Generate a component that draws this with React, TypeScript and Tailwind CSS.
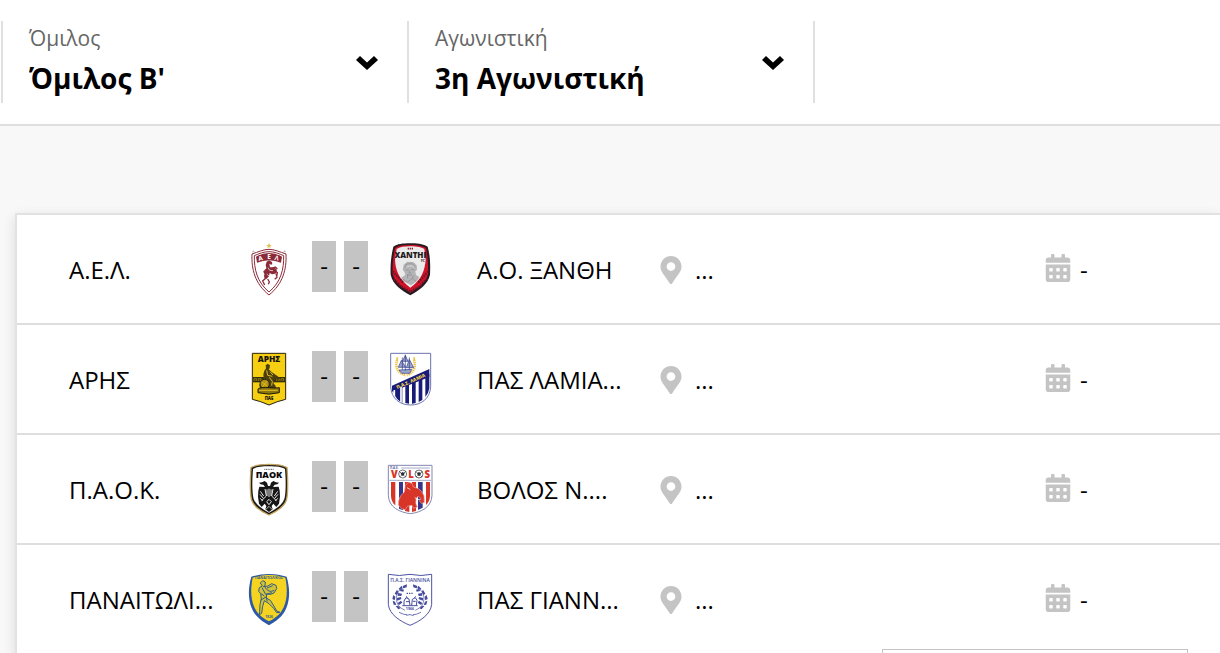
import { ReactNode } from 'react'
import { FaCalendarAlt, FaMapMarkerAlt } from 'react-icons/fa'

interface Match {
  home: string
  away: string
  homeCrest: ReactNode
  awayCrest: ReactNode
}

const crestFont = "'Open Sans', sans-serif"

function HomeCrest({ name, children }: { name: string; children: ReactNode }) {
  return (
    <svg viewBox="12 33 150 165" role="img" aria-label={name} className="mb-1 h-[55px] w-[50px] shrink-0">
      {children}
    </svg>
  )
}

function AwayCrest({ name, children }: { name: string; children: ReactNode }) {
  return (
    <svg viewBox="438 33 150 165" role="img" aria-label={name} className="mb-1 h-[55px] w-[50px] shrink-0">
      {children}
    </svg>
  )
}

const ael = (
  <HomeCrest name="Α.Ε.Λ.">
    <path d="M87 39l2.500 6h6l-5 4 2 6-5.500-4-5.500 4 2-6-5-4h6z" fill="#e3bd4e" />
    <path d="M40 60l1.500 3h3l-2.500 2 1 3-3-2-3 2 1-3-2.500-2h3zM134 60l1.500 3h3l-2.500 2 1 3-3-2-3 2 1-3-2.500-2h3z" fill="#b9b9bd" />
    <path d="M87 58C103 58 120 66 138 72C140 118 129 161 87 195C45 161 34 118 36 72C54 66 71 58 87 58z" fill="#fff" stroke="#8b2b39" strokeWidth="3" />
    <path d="M87 65C103 65 117 71 131 77C132 117 123 156 87 186C51 156 42 117 43 77C57 71 71 65 87 65z" fill="none" stroke="#8b2b39" strokeWidth="3" />
    <path d="M48 80Q87 58 126 80L123 98Q87 83 51 98z" fill="#8b2b39" />
    <g fill="#fff" fontFamily={crestFont} fontWeight="700" fontSize="19">
      <text x="56" y="93" transform="rotate(-12 56 93)">Α</text>
      <text x="82" y="87">Ε</text>
      <text x="103" y="89" transform="rotate(12 103 89)">Λ</text>
    </g>
    <path d="M80 95l7-4 9 5 1 7-4 1-5-3 2 11 11 0 8 5 2 7-5 7-10 2-7-4-2 10-7 7-6 0-2-8 3-13 4-11-2-9z" fill="#8b2b39" />
    <path d="M97 115l9-4 6 6M100 120l12 8-2 12M79 118l-7 7 3 6M78 144l-10 9 6 12M83 147l5 9-3 7M108 131l3 11-7 6" fill="none" stroke="#8b2b39" strokeWidth="4" />
    <path d="M84 113l5 8 10 1M80 132l7 6" fill="none" stroke="#fff" strokeWidth="2" />
  </HomeCrest>
)

const xanthi = (
  <AwayCrest name="Α.Ο. ΞΑΝΘΗ">
    <path d="M513 40C536 39 557 44 566 50C575 83 574 111 573 134C567 164 539 181 514 196C488 181 461 164 455 134C454 111 455 83 463 50C474 42 492 40 513 40z" fill="#251b20" />
    <path d="M513 45C535 44 553 49 561 54C567 82 568 110 567 132C561 158 537 173 514 188C491 173 467 158 461 132C460 110 462 82 468 54C479 47 495 45 513 45z" fill="#cf122a" />
    <path d="M513 49C535 49 550 53 556 57L560 90C557 120 549 149 514 173C479 149 470 120 468 90L473 57C482 51 496 49 513 49z" fill="#ebebeb" />
    <path d="M461 124L492 157M465 148L483 164M568 124L537 158M565 146L545 163M481 166L514 185L548 166" fill="none" stroke="#691526" strokeWidth="6" strokeDasharray="5 3" />
    <path d="M491 119l3-15 11-9 18 1 10 10 1 14-5 4 2 11 10 6-7 12-18 13-23-13-7-10 13-8-3-10z" fill="#b4b4b6" />
    <path d="M497 114l6-12 16-1 11 10M500 120h9m7-1h9m-13 2-2 8h7m-12 6h14M492 147l12 10 17-12 10 9M506 133v12m17-9-3 10" fill="none" stroke="#8a8a8e" strokeWidth="2" />
    <path d="M503 111q15-8 23 2" fill="none" stroke="#dadada" strokeWidth="3" />
    <path d="M506 56h18" stroke="#8e2731" strokeWidth="5" strokeDasharray="4 2" />
    <text x="514" y="84" textAnchor="middle" fontFamily={crestFont} fontWeight="800" fontSize="24" fill="#1e191c">XANTHI</text>
    <text x="546" y="97" fontFamily={crestFont} fontWeight="700" fontSize="10" fill="#2b2327">FC</text>
  </AwayCrest>
)

const aris = (
  <HomeCrest name="ΑΡΗΣ">
    <path d="M37 40H137V178Q111 184 87 195Q63 184 37 178z" fill="#f6ce12" stroke="#26220f" strokeWidth="3" />
    <text x="87" y="66" textAnchor="middle" fontFamily={crestFont} fontWeight="800" fontSize="25" fill="#17150e">ΑΡΗΣ</text>
    <path d="M39 111H135V127H39z" fill="#37300f" />
    <path d="M42 123v-7h8v5h-4m9 2v-7h8v5h-4m51 2v-7h8v5h-4m9 2v-7h8v5h-4" fill="none" stroke="#c4a315" strokeWidth="2" />
    <path d="M77 76l6-5 7 5-1 9-3 3 10 9 15 10 8 6-2 6-13-2-4 12 7 9 2 11H60l-2-14 8-14 5-6-1-12 3-11 5-7z" fill="#4c410e" />
    <circle cx="74" cy="132" r="14" fill="#b09314" stroke="#282307" strokeWidth="3" />
    <path d="M66 126l15 12m-1-14-12 16M80 91l3 15 14 3M88 112l9 12-2 13M90 95l9 10" fill="none" stroke="#e0b91e" strokeWidth="3" />
    <path d="M54 147q9-6 33-4t31 0v15q-31 9-64 0z" fill="#8c7610" stroke="#221e0d" strokeWidth="3" />
    <path d="M57 151h56" stroke="#e6bf1b" strokeWidth="3" />
    <text x="87" y="180" textAnchor="middle" fontFamily={crestFont} fontWeight="800" fontSize="13" fill="#17150e">ΠΑΕ</text>
  </HomeCrest>
)

const lamia = (
  <AwayCrest name="ΠΑΣ ΛΑΜΙΑ">
    <path d="M455 40H575V140C573 177 546 195 515 195C484 195 457 177 455 140z" fill="#fff" stroke="#6a73ad" strokeWidth="3" />
    <path d="M459 137L571 87V111L459 155z" fill="#181b78" />
    <path d="M462 150C466 171 480 184 490 188V136L459 149z" fill="#181b78" />
    <path d="M499 132l11-5v64l-11-2zM519 123l11-5v71l-11 2zM539 115l11-5v70l-11 6zM559 106l12-5v43q-2 16-12 27zM474 143l8-3v42l-8-7z" fill="#181b78" />
    <path d="M466 150v17M486 140v47" stroke="#fff" strokeWidth="5" />
    <path d="M474 60q-9 37 27 46M525 60q10 32-21 46" fill="none" stroke="#ecc64e" strokeWidth="8" strokeDasharray="4 2" />
    <path d="M476 52q-4 6 0 10M524 52q4 6 0 10" fill="none" stroke="#ecc64e" strokeWidth="5" />
    <path d="M499 44v48M490 52v37M511 52v37M480 90l38-2-6 12h-24zM487 61l-9 21h22zM499 46l-9 18h17zM511 58l-9 25h22z" fill="#99a2cb" stroke="#303d86" strokeWidth="2" />
    <text x="475" y="147" transform="rotate(-24 475 147)" fontFamily={crestFont} fontWeight="800" fontSize="14" fill="#f2d34d">Π.Α.Σ. ΛΑΜΙΑ</text>
  </AwayCrest>
)

const paok = (
  <HomeCrest name="Π.Α.Ο.Κ.">
    <path d="M87 43C111 43 130 46 141 53C144 96 145 127 139 151Q131 175 87 195Q43 175 35 151C29 127 30 96 33 53C44 46 63 43 87 43z" fill="#1d1c17" stroke="#c4a460" strokeWidth="4" />
    <path d="M87 49C108 49 126 51 135 57C138 96 138 127 133 147Q126 168 87 188Q48 168 41 147C36 127 36 96 39 57C48 51 66 49 87 49z" fill="#fff" />
    <text x="87" y="84" textAnchor="middle" fontFamily={crestFont} fontWeight="800" fontSize="27" fill="#080808">ΠΑΟΚ</text>
    <path d="M73 58h28" stroke="#555" strokeWidth="3" strokeDasharray="3 2" />
    <path d="M84 108l-3-10-7-5-8 4-9 1 5 5 8 1 5 7-17-1-3 12-1 18 3 21 8 10 9-10 5 7-3 10 11 8 11-8-3-10 5-7 9 10 8-10 3-21-1-18-3-12-17 1 5-7 8-1 5-5-9-1-8-4-7 5-3 10z" fill="#161616" />
    <path d="M75 117l4 21-14 14M99 117l-4 21 14 14M87 116v25M81 118v20m12-20v20M61 124l10 14m-11-5 10 12m-9 0 7 8M113 124l-10 14m11-5-10 12m9 0-7 8M80 155l7-7 7 7-7 9z" fill="none" stroke="#e8e8e8" strokeWidth="3" />
    <path d="M77 179l10-10 10 10" fill="none" stroke="#fff" strokeWidth="2" />
  </HomeCrest>
)

const volos = (
  <AwayCrest name="ΒΟΛΟΣ Ν.Π.Σ.">
    <path d="M448 46H579V136C578 172 546 187 514 191C482 187 449 172 448 136z" fill="#fff" stroke="#8389b3" strokeWidth="3" />
    <text x="453" y="56" fontFamily={crestFont} fontWeight="700" fontSize="9" fill="#555f9a">Π.Α.Ε.</text>
    <path d="M487 54h85" stroke="#777fae" strokeWidth="2" />
    <g fill="#d83529" fontFamily={crestFont} fontWeight="800" fontSize="29" textAnchor="middle">
      <text x="466" y="83">V</text>
      <text x="516" y="83">L</text>
      <text x="565" y="83">S</text>
    </g>
    <g fill="#fff" stroke="#292c34" strokeWidth="2">
      <circle cx="491" cy="72" r="12" />
      <circle cx="540" cy="72" r="12" />
    </g>
    <path d="M491 66l6 4-3 7h-6l-3-7zM540 66l6 4-3 7h-6l-3-7z" fill="#292c34" />
    <path d="M482 65l3 3m15-3-4 3m-13 12 3-3m13 3-3-3M531 65l3 3m15-3-4 3m-13 12 3-3m13 3-3-3" stroke="#292c34" strokeWidth="3" />
    <path d="M451 91H576" stroke="#777fae" strokeWidth="2" />
    <path d="M456 96h13v70q-12-9-13-28zM498 96h13v90l-13-3zM519 96h12v87l-12 3zM561 96h12v42q-1 17-12 27z" fill="#d83529" />
    <path d="M480 96h12v85l-12-5zM537 96h14v77l-14 7z" fill="#38368b" />
    <path d="M478 165l1-13 6-15 11-11 3-19 9-10 11 3 4 11 16 5 9 9 7 12 1 20-8 4-7-9 5-7-9-6-6 7-1 14 5 11-12 4-4-9-14 3-6 10-12-3z" fill="#d83529" stroke="#f4a2a1" strokeWidth="2" />
    <path d="M527 142q8 10 17 6M504 113l10 6" fill="none" stroke="#fff" strokeWidth="2" />
  </AwayCrest>
)

const panaitolikos = (
  <HomeCrest name="ΠΑΝΑΙΤΩΛΙΚΟΣ">
    <path d="M87 42C107 42 126 46 140 50C149 81 151 116 139 144C128 171 107 184 87 196C67 184 46 171 35 144C23 116 25 81 34 50C48 46 67 42 87 42z" fill="#2c58a5" />
    <path d="M87 45C106 45 124 49 136 53C142 83 143 115 131 142C121 164 104 176 87 184C70 176 53 164 43 142C31 115 32 83 38 53C50 49 68 45 87 45z" fill="#f4d420" />
    <text x="87" y="57" textAnchor="middle" fontFamily={crestFont} fontWeight="700" fontSize="11" fill="#365f8d">ΠΑΝΑΙΤΩΛΙΚΟΣ</text>
    <path d="M61 69l7-7 8 4-1 11-5 3 13-2 12-7 13 5 2 10-8 13-10 4-12-1-1 12 12 7 12 19 7 13 10 4-10 1-9-13-14-14-14-9-5 17-3 21-7 4 1-9 1-22 4-16-2-16-6-7 2-11 9-5z" fill="#d3c33a" stroke="#335b85" strokeWidth="3" />
    <path d="M74 80q12 21 29 11M66 83l11 20 19-5M63 101l10 7m-12 13 17-10 4 13M81 84l17-7" fill="none" stroke="#335b85" strokeWidth="3" />
    <text x="87" y="174" textAnchor="middle" fontFamily={crestFont} fontWeight="700" fontSize="10" fill="#365f8d">1926</text>
  </HomeCrest>
)

const giannina = (
  <AwayCrest name="ΠΑΣ ΓΙΑΝΝΙΝΑ">
    <path d="M448 43Q481 50 513 43Q546 50 578 43V133C575 164 542 184 513 196C484 184 451 164 448 133z" fill="#fff" stroke="#4e54a3" strokeWidth="3" />
    <text x="513" y="66" textAnchor="middle" fontFamily={crestFont} fontWeight="600" fontSize="15" fill="#454b9d">Π.Α.Σ. ΓΙΑΝΝΙΝΑ</text>
    <path d="M499 80q-27 10-27 35t26 36M528 80q27 10 27 35t-26 36" fill="none" stroke="#454b9d" strokeWidth="2" />
    <g fill="#454b9d">
      <path d="M504 73l-13 5 2 7 10-3zM488 77l-9 9 4 5 7-6zM474 89l-7 12 6 4 5-9zM463 105l-3 12 7 4 2-11zM461 122l3 12 8 1-4-10zM470 138l8 10 7-3-8-8zM485 86l10 3-2 6-10-2zM477 99l12 2-2 7-11-1zM473 114l13-3 1 6-12 5zM476 129l10-7 4 6-10 7z" />
      <path d="M522 73l13 5-2 7-10-3zM538 77l9 9-4 5-7-6zM552 89l7 12-6 4-5-9zM563 105l3 12-7 4-2-11zM565 122l-3 12-8 1 4-10zM556 138l-8 10-7-3 8-8zM541 86l-10 3 2 6 10-2zM549 99l-12 2 2 7 11-1zM553 114l-13-3-1 6 12 5zM550 129l-10-7-4 6 10 7z" />
    </g>
    <path d="M503 100h20" stroke="#454b9d" strokeWidth="4" strokeDasharray="4 3" />
    <path d="M490 137h46M495 136v-13l6-10 9 4 3 19M518 136l2-18 9-5 5 8-2 15M505 114l-3-5M526 113l4-4M501 125h9M522 124h8" fill="none" stroke="#454b9d" strokeWidth="3" />
    <text x="513" y="151" textAnchor="middle" fontFamily={crestFont} fontWeight="700" fontSize="11" fill="#454b9d">1966</text>
    <path d="M480 157q16 8 24 7m42-7q-16 8-24 7M502 166q11-5 22 1" fill="none" stroke="#7276b6" strokeWidth="3" />
  </AwayCrest>
)

const matches: Match[] = [
  { home: 'Α.Ε.Λ.', away: 'Α.Ο. ΞΑΝΘΗ', homeCrest: ael, awayCrest: xanthi },
  { home: 'ΑΡΗΣ', away: 'ΠΑΣ ΛΑΜΙΑ...', homeCrest: aris, awayCrest: lamia },
  { home: 'Π.Α.Ο.Κ.', away: 'ΒΟΛΟΣ Ν....', homeCrest: paok, awayCrest: volos },
  { home: 'ΠΑΝΑΙΤΩΛΙ...', away: 'ΠΑΣ ΓΙΑΝΝ...', homeCrest: panaitolikos, awayCrest: giannina },
]

function FilterSelect({ id, label, value }: { id: string; label: string; value: string }) {
  return (
    <div className="relative w-[406px] border-l-2 border-[#e0e0e0]">
      <label htmlFor={id} className="block pt-1 pl-[26px] text-[21px] leading-[26px] text-[#666]">
        {label}
      </label>
      <select
        id={id}
        defaultValue={value}
        className="mt-1 block h-12 w-full appearance-none bg-transparent pr-16 pl-[26px] text-[28px] font-bold text-black"
      >
        <option>{value}</option>
      </select>
      <svg
        viewBox="0 0 22 14"
        aria-hidden="true"
        className="pointer-events-none absolute top-[35px] right-[29px] h-[14px] w-[22px]"
      >
        <path d="M0 4L4 0 11 6.500 18 0 22 4 11 14z" fill="#000" />
      </svg>
    </div>
  )
}

function MatchRow({ match }: { match: Match }) {
  return (
    <li className="flex h-[110px] items-center border-b-2 border-[#dedede] pt-0.5 pl-[52px]">
      <span className="w-[175px] shrink-0 whitespace-nowrap">{match.home}</span>
      {match.homeCrest}
      <div className="mr-[17px] mb-2 ml-[18px] flex shrink-0 gap-2">
        <span className="flex h-[51px] w-6 items-center justify-center bg-[#c4c4c4]">-</span>
        <span className="flex h-[51px] w-6 items-center justify-center bg-[#c4c4c4]">-</span>
      </div>
      {match.awayCrest}
      <span className="ml-[42px] w-[180px] shrink-0 whitespace-nowrap">{match.away}</span>
      <div className="flex flex-1 items-center gap-2.5">
        <FaMapMarkerAlt className="size-7 text-[#c4c4c4]" />
        <span>...</span>
      </div>
      <div className="flex w-[176px] shrink-0 items-center gap-2">
        <FaCalendarAlt className="mb-1 size-7 text-[#c4c4c4]" />
        <span>-</span>
      </div>
    </li>
  )
}

export default function App() {
  return (
    <div className="relative h-screen overflow-hidden bg-[#f8f8f8] font-['Open_Sans',sans-serif] text-2xl text-black">
      <header className="flex border-b-2 border-[#dedede] bg-white pt-[21px] pb-[21px] pl-px">
        <FilterSelect id="group" label="Όμιλος" value="Όμιλος Β'" />
        <FilterSelect id="round" label="Αγωνιστική" value="3η Αγωνιστική" />
        <div className="border-l-2 border-[#e0e0e0]" />
      </header>

      <main className="pt-[87px] pl-[15px]">
        <ul className="border-t-2 border-l-2 border-[#e2e2e2] bg-white shadow-[0_4px_12px_rgba(0,0,0,0.12)]">
          {matches.map((match) => (
            <MatchRow key={match.home} match={match} />
          ))}
        </ul>
      </main>

      {/* Floating panel, collapsed at the bottom edge */}
      <div className="absolute right-8 bottom-0 h-1 w-[306px] border border-b-0 border-[#c4c4c4] bg-white" />
    </div>
  )
}
